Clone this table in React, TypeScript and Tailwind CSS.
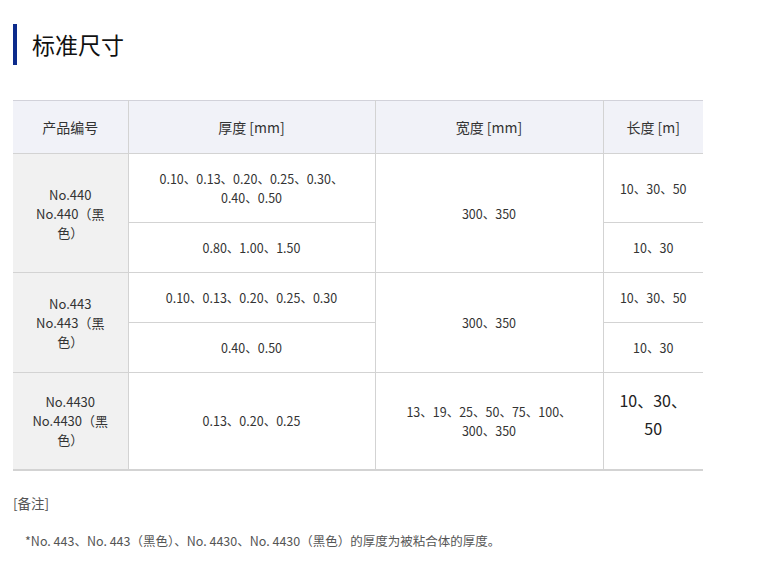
import React from "react";

const font = { fontFamily: '"Noto Sans CJK SC", "Noto Sans", sans-serif' };

const bd = "border-[#d3d3d3]";

export default function App() {
  return (
    <div className="min-h-[569px] w-[760px] bg-white pl-[13px] pt-[24px] text-[#333]" style={font}>
      <div className="flex h-[41px] items-center">
        <div className="h-full w-[4px] bg-[#0d2b8c]" />
        <h2 className="ml-[15px] text-[23px] leading-none text-[#111]">标准尺寸</h2>
      </div>

      <table className="mt-[35px] w-[690px] table-fixed border-collapse text-center text-[12.5px] leading-[19px]">
        <colgroup>
          <col className="w-[115px]" />
          <col className="w-[247px]" />
          <col className="w-[228px]" />
          <col className="w-[100px]" />
        </colgroup>
        <thead>
          <tr className="h-[53px] bg-[#f1f2f8] text-[14px]">
            <th className={`border-t border-b border-r border-t-[#d2d2da] ${bd} font-normal`}>产品编号</th>
            <th className={`border-t border-b border-r border-t-[#d2d2da] ${bd} font-normal`}>厚度 [mm]</th>
            <th className={`border-t border-b border-r border-t-[#d2d2da] ${bd} font-normal`}>宽度 [mm]</th>
            <th className={`border-t border-b border-t-[#d2d2da] ${bd} font-normal`}>长度 [m]</th>
          </tr>
        </thead>
        <tbody>
          <tr className="h-[69px]">
            <td rowSpan={2} className={`border-b border-r ${bd} bg-[#f1f1f1] text-[13px]`}>
              No.440<br />No.440（黑<br />色）
            </td>
            <td className={`border-b border-r ${bd}`}>
              0.10、0.13、0.20、0.25、0.30、<br />0.40、0.50
            </td>
            <td rowSpan={2} className={`border-b border-r ${bd}`}>300、350</td>
            <td className={`border-b ${bd}`}>10、30、50</td>
          </tr>
          <tr className="h-[50px]">
            <td className={`border-b border-r ${bd}`}>0.80、1.00、1.50</td>
            <td className={`border-b ${bd}`}>10、30</td>
          </tr>
          <tr className="h-[50px]">
            <td rowSpan={2} className={`border-b border-r ${bd} bg-[#f1f1f1] text-[13px]`}>
              No.443<br />No.443（黑<br />色）
            </td>
            <td className={`border-b border-r ${bd}`}>0.10、0.13、0.20、0.25、0.30</td>
            <td rowSpan={2} className={`border-b border-r ${bd}`}>300、350</td>
            <td className={`border-b ${bd}`}>10、30、50</td>
          </tr>
          <tr className="h-[50px]">
            <td className={`border-b border-r ${bd}`}>0.40、0.50</td>
            <td className={`border-b ${bd}`}>10、30</td>
          </tr>
          <tr className="h-[97px]">
            <td className={`border-b-2 border-r ${bd} bg-[#f1f1f1] text-[13px]`}>
              No.4430<br />No.4430（黑<br />色）
            </td>
            <td className={`border-b-2 border-r ${bd}`}>0.13、0.20、0.25</td>
            <td className={`border-b-2 border-r ${bd}`}>
              13、19、25、50、75、100、<br />300、350
            </td>
            <td className={`border-b-2 ${bd} pb-[14px] text-[16px] leading-[28px] text-[#222]`}>
              10、30、<br />50
            </td>
          </tr>
        </tbody>
      </table>

      <p className="mt-[23px] text-[13.5px] leading-[19px] text-[#555]">[备注]</p>
      <p className="mt-[19px] pl-[12px] text-[12.5px] leading-[18px] text-[#555]">
        *No. 443、No. 443（黑色）、No. 4430、No. 4430（黑色）的厚度为被粘合体的厚度。
      </p>
    </div>
  );
}
